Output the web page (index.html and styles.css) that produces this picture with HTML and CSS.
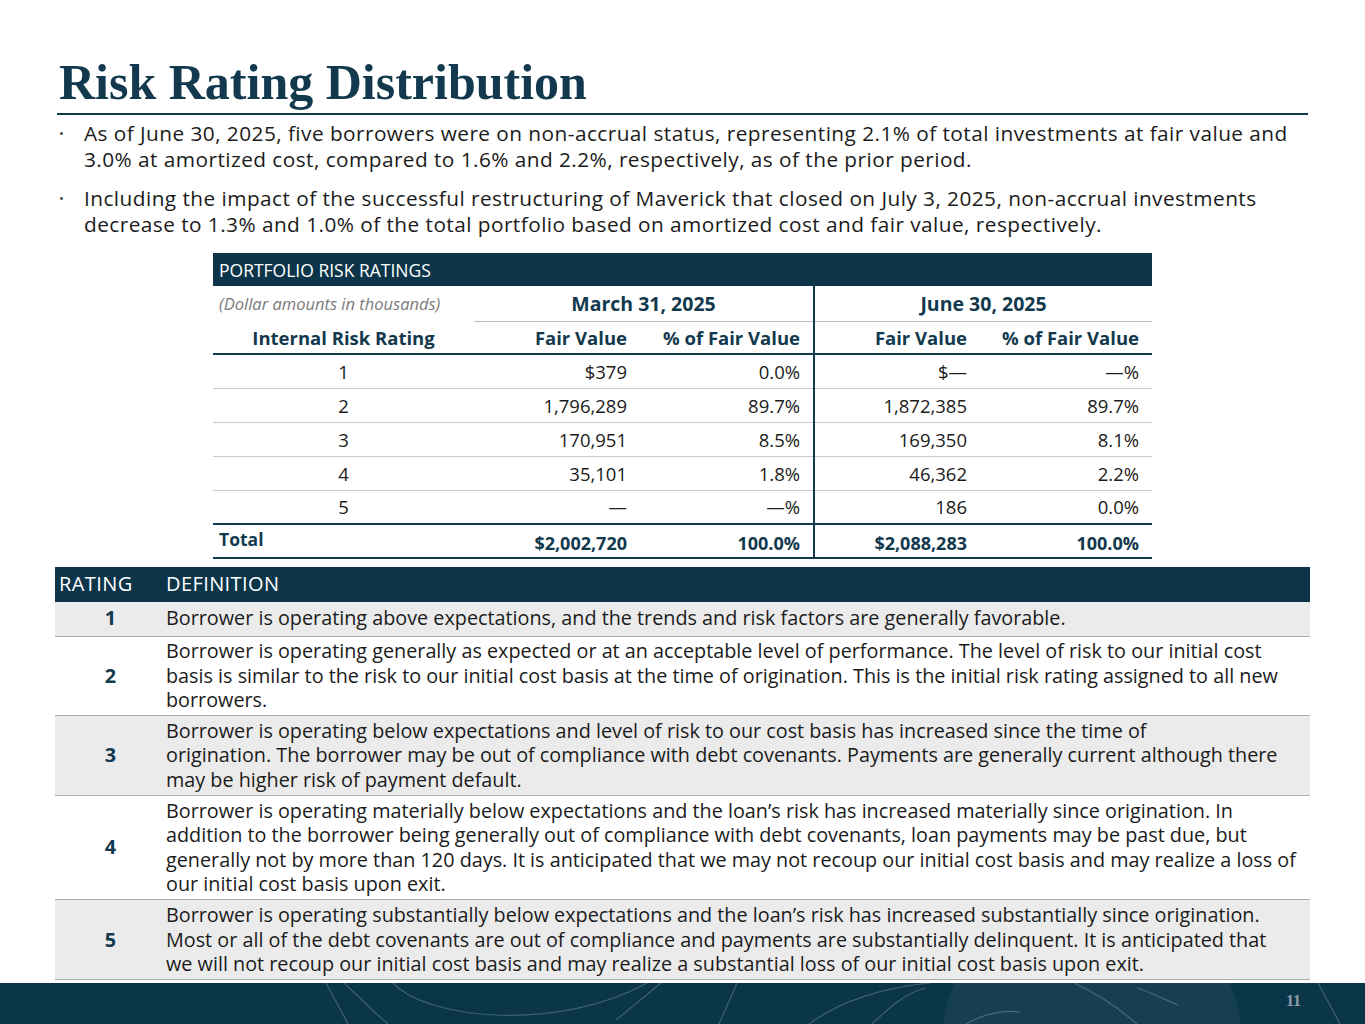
FILE: index.html
```html
<!DOCTYPE html>
<html lang="en">
<head>
<meta charset="utf-8">
<title>Risk Rating Distribution</title>
<link rel="stylesheet" href="styles.css">
</head>
<body>
<div class="page">
  <main class="content">
    <h1 class="title">Risk Rating Distribution</h1>
    <ul class="bullets">
      <li>As of June 30, 2025, five borrowers were on non-accrual status, representing 2.1% of total investments at fair value and<br>3.0% at amortized cost, compared to 1.6% and 2.2%, respectively, as of the prior period.</li>
      <li>Including the impact of the successful restructuring of Maverick that closed on July 3, 2025, non-accrual investments<br>decrease to 1.3% and 1.0% of the total portfolio based on amortized cost and fair value, respectively.</li>
    </ul>

    <table class="portfolio">
      <colgroup>
        <col class="c1"><col class="c2"><col class="c3"><col class="c4"><col class="c5">
      </colgroup>
      <thead>
        <tr class="bar"><th colspan="5">PORTFOLIO RISK RATINGS</th></tr>
        <tr class="dates">
          <th class="note">(Dollar amounts in thousands)</th>
          <th colspan="2" class="date">March 31, 2025</th>
          <th colspan="2" class="date split">June 30, 2025</th>
        </tr>
        <tr class="heads">
          <th class="center">Internal Risk Rating</th>
          <th>Fair Value</th>
          <th>% of Fair Value</th>
          <th class="split">Fair Value</th>
          <th>% of Fair Value</th>
        </tr>
      </thead>
      <tbody>
        <tr><td class="center">1</td><td>$379</td><td>0.0%</td><td class="split">$—</td><td>—%</td></tr>
        <tr><td class="center">2</td><td>1,796,289</td><td>89.7%</td><td class="split">1,872,385</td><td>89.7%</td></tr>
        <tr><td class="center">3</td><td>170,951</td><td>8.5%</td><td class="split">169,350</td><td>8.1%</td></tr>
        <tr><td class="center">4</td><td>35,101</td><td>1.8%</td><td class="split">46,362</td><td>2.2%</td></tr>
        <tr><td class="center">5</td><td>—</td><td>—%</td><td class="split">186</td><td>0.0%</td></tr>
      </tbody>
      <tfoot>
        <tr><td class="total-label">Total</td><td>$2,002,720</td><td>100.0%</td><td class="split">$2,088,283</td><td>100.0%</td></tr>
      </tfoot>
    </table>

    <table class="ratings">
      <thead>
        <tr><th class="rcol">RATING</th><th class="dcol">DEFINITION</th></tr>
      </thead>
      <tbody>
        <tr class="shade"><td class="rcol">1</td><td class="dcol">Borrower is operating above expectations, and the trends and risk factors are generally favorable.</td></tr>
        <tr><td class="rcol">2</td><td class="dcol">Borrower is operating generally as expected or at an acceptable level of performance. The level of risk to our initial cost<br>basis is similar to the risk to our initial cost basis at the time of origination. This is the initial risk rating assigned to all new<br>borrowers.</td></tr>
        <tr class="shade"><td class="rcol">3</td><td class="dcol">Borrower is operating below expectations and level of risk to our cost basis has increased since the time of<br>origination. The borrower may be out of compliance with debt covenants. Payments are generally current although there<br>may be higher risk of payment default.</td></tr>
        <tr><td class="rcol">4</td><td class="dcol">Borrower is operating materially below expectations and the loan’s risk has increased materially since origination. In<br>addition to the borrower being generally out of compliance with debt covenants, loan payments may be past due, but<br>generally not by more than 120 days. It is anticipated that we may not recoup our initial cost basis and may realize a loss of<br>our initial cost basis upon exit.</td></tr>
        <tr class="shade"><td class="rcol">5</td><td class="dcol">Borrower is operating substantially below expectations and the loan’s risk has increased substantially since origination.<br>Most or all of the debt covenants are out of compliance and payments are substantially delinquent. It is anticipated that<br>we will not recoup our initial cost basis and may realize a substantial loss of our initial cost basis upon exit.</td></tr>
      </tbody>
    </table>
  </main>

  <footer class="footer">
    <svg class="footer-art" width="1365" height="41" viewBox="0 0 1365 41" aria-hidden="true">
      <circle cx="1092" cy="60" r="150" fill="#ffffff" fill-opacity="0.05"/>
      <g fill="none" stroke="#ffffff" stroke-opacity="0.22" stroke-width="1.2">
        <path d="M326 0 L348 41"/>
        <path d="M344 0 C360 15 375 30 388 41"/>
        <path d="M393 0 C430 38 560 48 647 0"/>
        <path d="M661 0 L616 37"/>
        <path d="M737 0 L719 41"/>
        <path d="M809 41 C840 18 885 4 930 0"/>
        <path d="M872 41 C890 24 905 10 926 5"/>
        <path d="M1074 0 C1100 12 1122 28 1137 41"/>
        <path d="M1137 5 C1152 10 1166 17 1178 22"/>
        <path d="M966 41 C985 30 1005 27 1020 29"/>
        <path d="M1318 0 L1340 41"/>
      </g>
    </svg>
    <span class="page-num">11</span>
  </footer>
</div>
</body>
</html>
```

FILE: styles.css
```css
* { box-sizing: border-box; }

html, body {
  margin: 0;
  padding: 0;
  background: #ffffff;
}

body {
  font-family: "Open Sans", "Noto Sans", sans-serif;
  color: #1b1b1b;
}

.page {
  width: 1365px;
  height: 1024px;
  display: flex;
  flex-direction: column;
  overflow: hidden;
}

.content {
  flex: 1;
  min-height: 0;
  padding: 0 55px;
  display: flex;
  flex-direction: column;
}

.title {
  margin: 53px 0 0 2px;
  font-family: "Liberation Serif", "DejaVu Serif", serif;
  font-weight: 700;
  font-size: 50px;
  line-height: 58px;
  color: #12394d;
  border-bottom: 2px solid #12394d;
  padding: 0 0 2px 2px;
  width: 1251px;
}

.bullets {
  list-style: none;
  margin: 5px 0 0 0;
  padding: 0 0 0 29px;
  font-size: 20.8px;
  line-height: 26px;
  letter-spacing: 0.45px;
  white-space: nowrap;
}

.bullets li {
  position: relative;
  margin-bottom: 13px;
}

.bullets li::before {
  content: "•";
  position: absolute;
  left: -25px;
  top: 0;
  font-size: 13px;
  color: #444;
}

/* Portfolio table */
.portfolio {
  margin: 3px 0 0 158px;
  width: 939px;
  border-collapse: collapse;
  font-size: 18.5px;
  table-layout: fixed;
  flex-shrink: 0;
}

.portfolio .c1 { width: 261px; }
.portfolio .c2 { width: 166px; }
.portfolio .c3 { width: 174px; }
.portfolio .c4 { width: 166px; }
.portfolio .c5 { width: 172px; }

.portfolio .bar th {
  background: #0d3549;
  color: #ffffff;
  font-weight: 400;
  text-align: left;
  height: 33px;
  padding: 0 6px;
  font-size: 17.5px;
}

.portfolio .dates th {
  height: 35px;
  padding: 0;
}

.portfolio .dates .note {
  font-style: italic;
  font-weight: 400;
  color: #7a7a7a;
  text-align: left;
  padding-left: 6px;
  font-size: 16.5px;
}

.portfolio .dates .date {
  color: #12394d;
  font-weight: 700;
  font-size: 19.5px;
  text-align: center;
  border-bottom: 1px solid #b9bcbf;
}

.portfolio .heads th {
  height: 33px;
  color: #12394d;
  font-weight: 700;
  text-align: right;
  padding: 0 13px 0 0;
  border-bottom: 2px solid #12394d;
  font-size: 18.5px;
}

.portfolio .heads th.center { text-align: center; padding: 0; }

.portfolio td {
  height: 34px;
  text-align: right;
  padding: 0 13px 0 0;
  border-bottom: 1px solid #c9cccf;
}

.portfolio td.center { text-align: center; padding: 0; }

.portfolio tbody tr:last-child td { border-bottom: none; }

.portfolio tfoot td {
  font-weight: 700;
  color: #12394d;
  border-top: 2px solid #12394d;
  border-bottom: 2px solid #12394d;
  height: 34px;
  font-size: 18px;
  padding-top: 3px;
}

.portfolio tfoot td.total-label {
  text-align: left;
  padding: 0 0 4px 6px;
  font-size: 17.5px;
}

.portfolio .split { border-left: 2px solid #12394d; }

/* Ratings table */
.ratings {
  margin-top: 8px;
  width: 1255px;
  border-collapse: collapse;
  font-size: 19.8px;
  line-height: 24.6px;
  flex-shrink: 0;
}

.ratings thead th {
  background: #0d3549;
  color: #ffffff;
  font-weight: 400;
  font-size: 20px;
  letter-spacing: 0.4px;
  text-align: left;
  height: 35px;
  padding: 0;
}

.ratings thead th.rcol { padding-left: 4px; width: 111px; }

.ratings td {
  border-bottom: 1px solid #a9b0b5;
  padding: 0;
  vertical-align: middle;
}

.ratings td.rcol {
  text-align: center;
  font-weight: 700;
  color: #12394d;
  width: 111px;
}

.ratings td.dcol {
  padding: 2.5px 4px 2.5px 0;
  white-space: nowrap;
}

.ratings tr.shade td { background: #ebebeb; }

.ratings tbody tr:first-child td { height: 34px; padding-top: 0; padding-bottom: 0; }

/* Footer */
.footer {
  position: relative;
  height: 41px;
  background: #0b3549;
  flex-shrink: 0;
}

.footer-art {
  position: absolute;
  left: 0;
  top: 0;
  display: block;
}

.page-num {
  position: absolute;
  left: 1286px;
  top: 9px;
  font-family: "Liberation Serif", serif;
  font-size: 16px;
  font-weight: 700;
  color: #8c9ba5;
}
```
